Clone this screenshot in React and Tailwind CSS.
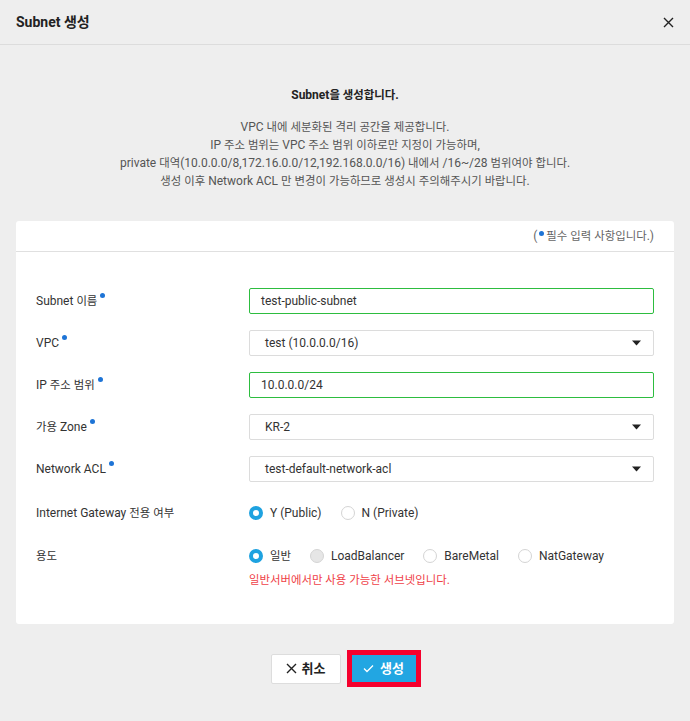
import React from "react";

const font = { fontFamily: 'Roboto, "Noto Sans CJK KR", "Noto Sans", sans-serif' };

function K({ children, k = "text-[11.4px]" }) {
  const parts = String(children).split(/([\uAC00-\uD7A3]+)/);
  return (
    <>
      {parts.map((p, i) =>
        /[\uAC00-\uD7A3]/.test(p) ? (
          <span key={i} className={k}>{p}</span>
        ) : (
          <React.Fragment key={i}>{p}</React.Fragment>
        )
      )}
    </>
  );
}

function Dot() {
  return <span className="inline-block w-[5px] h-[5px] rounded-full bg-[#1e74d6] ml-[3px] relative top-[-6px]" />;
}

function Label({ children, req }) {
  return (
    <div className="w-[213px] shrink-0 text-[12px] text-[#333] flex items-center">
      <span><K>{children}</K></span>
      {req && <Dot />}
    </div>
  );
}

function TextInput({ value }) {
  return (
    <div className="flex-1 h-[26px] border border-[#2dbd3f] rounded-[2px] bg-white flex items-center pl-[11px] text-[12px] text-[#333]">
      {value}
    </div>
  );
}

function Select({ value }) {
  return (
    <div className="flex-1 h-[26px] border border-[#dcdcdc] rounded-[2px] bg-white flex items-center pl-[15px] pr-[12px] text-[12px] text-[#333] justify-between">
      <span>{value}</span>
      <svg width="9" height="6" viewBox="0 0 9 6"><path d="M0 0.5H9L4.5 5.5Z" fill="#222" /></svg>
    </div>
  );
}

function Radio({ state, label, className = "" }) {
  let circle;
  if (state === "on") circle = <span className="w-[14px] h-[14px] rounded-full border-[4px] border-[#1ea2e0] bg-white shrink-0" />;
  else if (state === "disabled") circle = <span className="w-[14px] h-[14px] rounded-full border border-[#d4d4d4] bg-[#e6e6e6] shrink-0" />;
  else circle = <span className="w-[14px] h-[14px] rounded-full border border-[#d4d4d4] bg-white shrink-0" />;
  return (
    <div className={"flex items-center gap-[7px] text-[12px] text-[#333] " + className}>
      {circle}
      <span><K>{label}</K></span>
    </div>
  );
}

export default function App() {
  return (
    <div style={font} className="w-[690px] h-[721px] bg-[#eeeeee] flex flex-col">
      <div className="h-[45px] border-b border-[#dcdcdc] flex items-center justify-between pl-4 pr-[16px] shrink-0">
        <span className="text-[14px] font-bold text-[#222]">Subnet 생성</span>
        <svg width="11" height="11" viewBox="0 0 11 11"><path d="M1 1L10 10M10 1L1 10" stroke="#222" strokeWidth="1.4" /></svg>
      </div>
      <div className="px-4 flex flex-col">
        <div className="pt-[41px] text-center text-[12px] leading-[18px] font-bold text-[#222]"><K>Subnet을 생성합니다.</K></div>
        <div className="mt-[14px] text-center text-[12px] leading-[18px] text-[#555]">
          <div><K>VPC 내에 세분화된 격리 공간을 제공합니다.</K></div>
          <div><K>IP 주소 범위는 VPC 주소 범위 이하로만 지정이 가능하며,</K></div>
          <div><K>private 대역(10.0.0.0/8,172.16.0.0/12,192.168.0.0/16) 내에서 /16~/28 범위여야 합니다.</K></div>
          <div><K>생성 이후 Network ACL 만 변경이 가능하므로 생성시 주의해주시기 바랍니다.</K></div>
        </div>
        <div className="mt-[31px] bg-white rounded-[3px] h-[403px] flex flex-col">
          <div className="h-[31px] border-b border-[#e0e0e0] flex items-center justify-end pr-[20px] text-[12px] text-[#666]">
            <span>(</span><span className="inline-block w-[5px] h-[5px] rounded-full bg-[#1e74d6] mx-[2px] relative top-[-3px]" /><span><K>필수 입력 사항입니다.)</K></span>
          </div>
          <div className="pt-[36px] pl-[20px] pr-[20px] flex flex-col gap-[16px]">
            <div className="flex h-[26px]"><Label req>Subnet 이름</Label><TextInput value="test-public-subnet" /></div>
            <div className="flex h-[26px]"><Label req>VPC</Label><Select value="test (10.0.0.0/16)" /></div>
            <div className="flex h-[26px]"><Label req>IP 주소 범위</Label><TextInput value="10.0.0.0/24" /></div>
            <div className="flex h-[26px]"><Label req>가용 Zone</Label><Select value="KR-2" /></div>
            <div className="flex h-[26px]"><Label req>Network ACL</Label><Select value="test-default-network-acl" /></div>
          </div>
          <div className="mt-[18px] pl-[20px] flex h-[26px]">
            <Label>Internet Gateway 전용 여부</Label>
            <div className="flex items-center">
              <Radio state="on" label="Y (Public)" />
              <Radio state="off" label="N (Private)" className="ml-[19px]" />
            </div>
          </div>
          <div className="mt-[17px] pl-[20px] flex h-[26px]">
            <Label>용도</Label>
            <div className="flex items-center">
              <Radio state="on" label="일반" />
              <Radio state="disabled" label="LoadBalancer" className="ml-[19px]" />
              <Radio state="off" label="BareMetal" className="ml-[19px]" />
              <Radio state="off" label="NatGateway" className="ml-[19px]" />
            </div>
          </div>
          <div className="pl-[233px] mt-[2px] text-[12px] leading-[18px] text-[#ef3f48]"><K>일반서버에서만 사용 가능한 서브넷입니다.</K></div>
        </div>
        <div className="mt-[26px] flex justify-center items-center gap-[6px] pl-[1px]">
          <div className="w-[70px] h-[30px] bg-white border border-[#dddddd] rounded-[2px] flex items-center justify-center gap-[5px] text-[13px] font-bold text-[#222]">
            <svg width="11" height="11" viewBox="0 0 11 11"><path d="M1 1L10 10M10 1L1 10" stroke="#222" strokeWidth="1.4" /></svg>
            <span>취소</span>
          </div>
          <div className="w-[74px] h-[37px] border-[5px] border-[#f5002d] bg-[#22a6e2] flex items-center justify-center gap-[6px] text-[13px] font-bold text-white">
            <svg width="11" height="9" viewBox="0 0 11 9"><path d="M1 4.5L4 7.5L10 1.5" stroke="#fff" strokeWidth="1.3" fill="none" /></svg>
            <span>생성</span>
          </div>
        </div>
      </div>
    </div>
  );
}
